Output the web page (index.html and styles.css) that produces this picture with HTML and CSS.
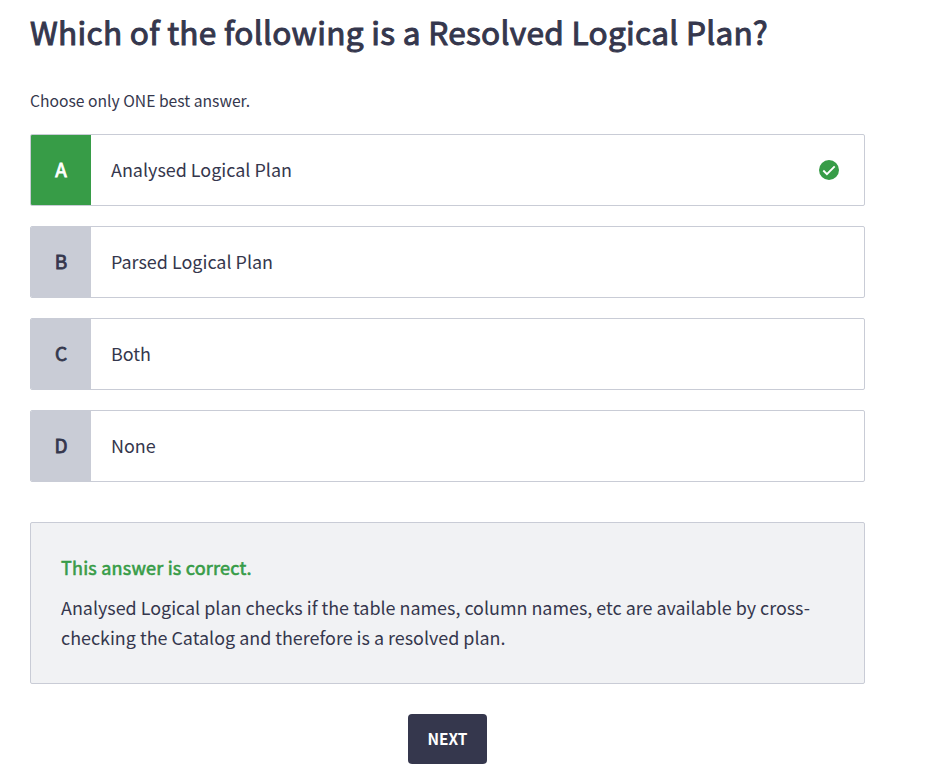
FILE: index.html
```html
<!DOCTYPE html>
<html lang="en">
<head>
<meta charset="utf-8">
<title>Quiz</title>
<link rel="stylesheet" href="styles.css">
</head>
<body>
<main class="quiz">
  <h1 class="question">Which of the following is a Resolved Logical Plan?</h1>
  <p class="hint">Choose only ONE best answer.</p>
  <ul class="options">
    <li class="option correct"><span class="letter">A</span><span class="label">Analysed Logical Plan</span>
      <svg class="check" viewBox="0 0 20 20"><circle cx="10" cy="10" r="10" fill="#379c47"/><path d="M4.3 10.5 7.9 14.1l7.8-7.8" fill="none" stroke="#fff" stroke-width="1.9"/></svg></li>
    <li class="option"><span class="letter">B</span><span class="label">Parsed Logical Plan</span></li>
    <li class="option"><span class="letter">C</span><span class="label">Both</span></li>
    <li class="option"><span class="letter">D</span><span class="label">None</span></li>
  </ul>
  <section class="feedback">
    <h2 class="verdict">This answer is correct.</h2>
    <p class="explanation">Analysed Logical plan checks if the table names, column names, etc are available by cross-<br>checking the Catalog and therefore is a resolved plan.</p>
  </section>
  <button class="next" type="button">NEXT</button>
</main>
</body>
</html>
```
FILE: styles.css
```css
* { box-sizing: border-box; margin: 0; padding: 0; }
body {
  background: #fff;
  color: #35374d;
  font-family: "Noto Sans CJK SC", "Noto Sans", sans-serif;
}
.quiz { width: 865px; padding: 7px 0 0 30px; display: flex; flex-direction: column; }
.question {
  font-size: 31.6px; font-weight: 400; line-height: 48px; white-space: nowrap;
  letter-spacing: 0.3px; -webkit-text-stroke: 1px currentColor;
}
.hint { margin-top: 34px; font-size: 15.68px; line-height: 24px; }
.options { margin-top: 21px; list-style: none; display: grid; gap: 20px; }
.option {
  display: flex; align-items: center; height: 72px;
  border: 1px solid #c9ccd6; border-radius: 2px; overflow: hidden;
}
.letter {
  width: 60px; height: 100%; padding-bottom: 3px; background: #c9ccd6;
  display: flex; align-items: center; justify-content: center;
  font-size: 19px; -webkit-text-stroke: 0.8px currentColor;
}
.label { padding: 0 0 2px 20px; font-size: 17.95px; flex: 1; }
.correct .letter { background: #379c47; color: #fff; }
.check { width: 20px; height: 20px; margin-right: 25px; }
.feedback {
  margin-top: 40px; height: 162px; padding: 29px 30px;
  border: 1px solid #c9ccd6; border-radius: 2px; background: #f1f2f4;
}
.verdict {
  font-size: 18px; font-weight: 400; line-height: 30px; color: #379c47;
  letter-spacing: 0.22px; -webkit-text-stroke: 0.6px currentColor;
}
.explanation { margin-top: 10px; font-size: 17.91px; line-height: 30px; white-space: nowrap; }
.next {
  margin-top: 30px; padding-bottom: 2px; align-self: center; width: 79px; height: 50px;
  border: 0; border-radius: 4px; background: #35374d; color: #fff;
  font: 700 15.4px "Noto Sans CJK SC", "Noto Sans", sans-serif;
}
```
